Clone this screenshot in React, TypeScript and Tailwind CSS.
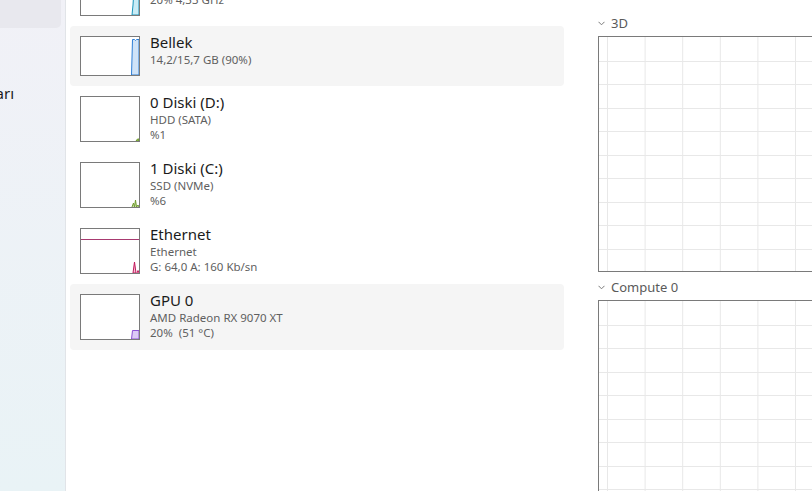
import React from 'react';

type Item = {
  title: string;
  lines: string[];
  graph: React.ReactNode;
  active?: boolean;
};

const Thumb: React.FC<{ tall: boolean; children: React.ReactNode }> = ({ tall, children }) => {
  const h = tall ? 44 : 38;
  return (
    <div className={`shrink-0 w-[60px] ${tall ? 'h-[46px]' : 'h-[40px]'} border border-[#7a7a7a] bg-white`}>
      <svg width="58" height={h} viewBox={`0 0 58 ${h}`} className="block">
        {children}
      </svg>
    </div>
  );
};

const items: Item[] = [
  {
    title: 'CPU',
    lines: ['20% 4,33 GHz'],
    graph: (
      <polygon
        points="51,38 52,28 53,12 54,16 55,6 56,9 57,4 58,5 58,38"
        fill="#c9ecf6"
        stroke="#1a94ba"
        strokeWidth="1"
      />
    ),
  },
  {
    title: 'Bellek',
    lines: ['14,2/15,7 GB (90%)'],
    active: true,
    graph: (
      <polygon
        points="50.5,38 51.5,2.5 53.5,2.5 54.5,3.5 55.5,2.5 58,2.5 58,38"
        fill="#cfe3f8"
        stroke="#2f7fd6"
        strokeWidth="1"
      />
    ),
  },
  {
    title: '0 Diski (D:)',
    lines: ['HDD (SATA)', '%1'],
    graph: <polygon points="55,44 56.5,42 58,42 58,44" fill="#9cbf5e" stroke="#6f9c2c" strokeWidth="1" />,
  },
  {
    title: '1 Diski (C:)',
    lines: ['SSD (NVMe)', '%6'],
    graph: (
      <polyline
        points="51,44 52.5,40 53.5,44 54.5,37 55.5,44 57,42 58,44"
        fill="#d7e8bd"
        stroke="#6f9c2c"
        strokeWidth="1"
      />
    ),
  },
  {
    title: 'Ethernet',
    lines: ['Ethernet', 'G: 64,0 A: 160 Kb/sn'],
    graph: (
      <>
        <line x1="0" y1="10.5" x2="58" y2="10.5" stroke="#a83a70" strokeWidth="1" />
        <polygon points="52,44 53.5,33 55,44" fill="#f2c2d5" stroke="#c2185b" strokeWidth="1" />
        <polyline points="56,44 57,41.5 58,44" fill="none" stroke="#c2185b" strokeWidth="1" />
      </>
    ),
  },
  {
    title: 'GPU 0',
    lines: ['AMD Radeon RX 9070 XT', '20%  (51 °C)'],
    active: true,
    graph: (
      <polygon points="50.5,44 51.5,35.5 58,35.5 58,44" fill="#dccbf6" stroke="#8c52d4" strokeWidth="1" />
    ),
  },
];

const Row: React.FC<{ item: Item }> = ({ item }) => {
  const tall = item.lines.length > 1;
  return (
    <div
      className={`flex gap-[10px] px-[10px] py-[10px] rounded-[4px] ${item.active ? 'bg-[#f5f5f5]' : 'bg-white'}`}
    >
      <Thumb tall={tall}>{item.graph}</Thumb>
      <div className="-mt-[3px] flex flex-col">
        <span className="text-[15px] leading-[19px] text-[#1b1b1b]">{item.title}</span>
        {item.lines.map((l) => (
          <span key={l} className="text-[11.5px] leading-[15px] text-[#5f5f5f] whitespace-pre">
            {l}
          </span>
        ))}
      </div>
    </div>
  );
};

const Chart: React.FC<{ height: number; label: string }> = ({ height, label }) => {
  const cols = Array.from({ length: 12 }, (_, i) => 8.5 + i * 37.6);
  const rows = Array.from({ length: 20 }, (_, i) => 23.5 + i * 23.5).filter((y) => y < height - 2);
  return (
    <div className="flex flex-col">
      <div className="flex items-center gap-[6px] h-[18px] text-[13px] text-[#5a5a5a]">
        <svg width="7" height="5" viewBox="0 0 7 5" className="block">
          <polyline points="0.5,0.8 3.5,3.8 6.5,0.8" fill="none" stroke="#7a7a7a" strokeWidth="1" />
        </svg>
        <span className="leading-[18px]">{label}</span>
      </div>
      <div className="mt-[4px] w-[420px] border border-[#7a7a7a] bg-white" style={{ height }}>
        <svg width="418" height={height - 2} className="block">
          {cols.map((x) => (
            <line key={`c${x}`} x1={x} y1="0" x2={x} y2={height} stroke="#e8e8e8" strokeWidth="1" />
          ))}
          {rows.map((y) => (
            <line key={`r${y}`} x1="0" y1={Math.round(y) + 0.5} x2="418" y2={Math.round(y) + 0.5} stroke="#e8e8e8" strokeWidth="1" />
          ))}
        </svg>
      </div>
    </div>
  );
};

const App: React.FC = () => {
  return (
    <div
      className="w-[812px] h-[491px] overflow-hidden flex bg-white"
      style={{ fontFamily: '"Noto Sans", "Open Sans", sans-serif' }}
    >
      <aside className="shrink-0 w-[66px] h-full overflow-hidden border-r border-[#e1e4e8] bg-gradient-to-b from-[#f1f1f7] to-[#e9f3f6] flex flex-col">
        <div className="w-[61px] h-[28px] bg-[#e8e8ee] rounded-br-[5px]" />
        <div className="mt-[55px] w-[14px] flex justify-end">
          <span className="whitespace-nowrap text-[15px] leading-[20px] text-[#1b1b1b]">Başlangıç uygulamaları</span>
        </div>
      </aside>

      <section className="shrink-0 w-[498px] pl-[4px]">
        <div className="-mt-[34px] flex flex-col">
          {items.map((it) => (
            <Row key={it.title} item={it} />
          ))}
        </div>
      </section>

      <section className="flex-1 pl-[34px] pt-[14px] flex flex-col gap-[6px]">
        <Chart label="3D" height={236} />
        <Chart label="Compute 0" height={220} />
      </section>
    </div>
  );
};

export default App;
